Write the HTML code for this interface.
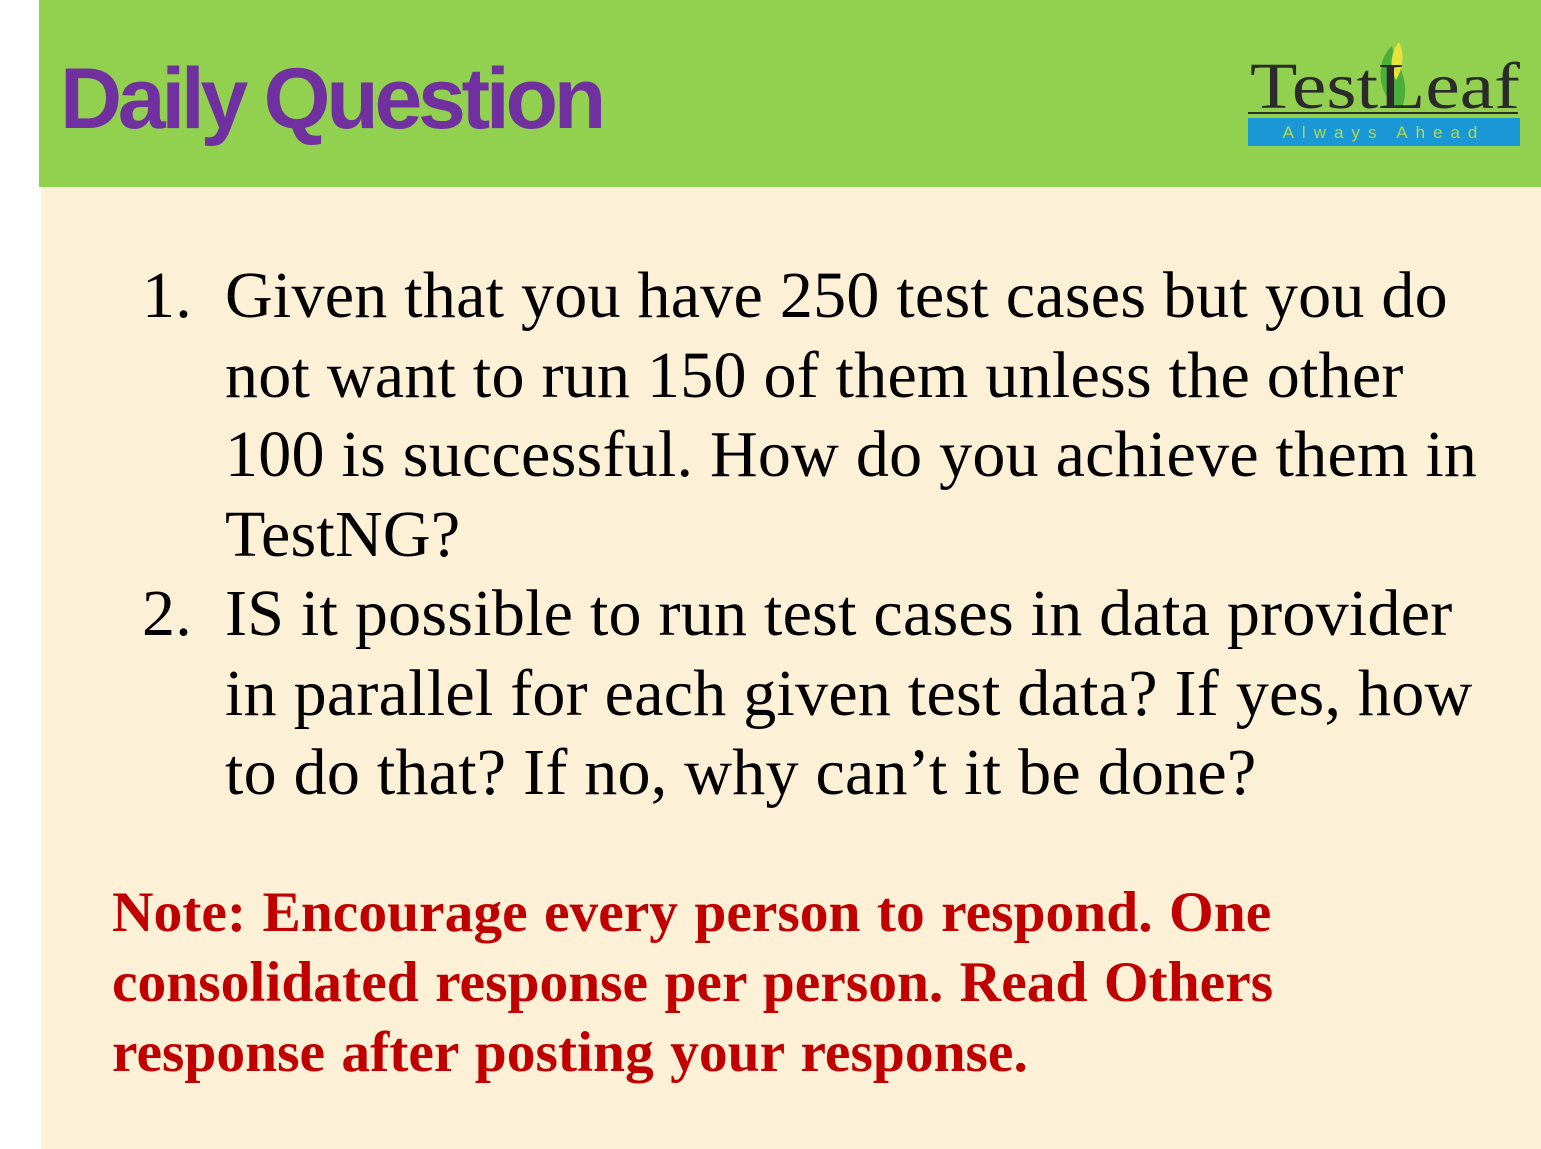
<!DOCTYPE html>
<html><head><meta charset="utf-8"><style>
body{margin:0;width:1541px;height:1149px;background:#fff;position:relative;overflow:hidden}
.hdr{position:absolute;left:39px;top:0;width:1502px;height:187px;background:#92d050}
.bg{position:absolute;left:41px;top:187px;width:1500px;height:962px;background:#fcf0d6}
.title{position:absolute;left:60px;top:54px;font:bold 86px/90px "Liberation Sans",sans-serif;color:#7030a0;letter-spacing:-4.3px;white-space:nowrap}
.q{position:absolute;font:66px/79.5px "Liberation Serif",serif;color:#000;white-space:nowrap;letter-spacing:0.25px}
.n{position:absolute;font:bold 57.5px/70px "Liberation Serif",serif;color:#c00000;white-space:nowrap;left:112px;top:878px;word-spacing:2px}
</style></head><body>
<div class="hdr"></div>
<div class="bg"></div>
<div class="title">Daily Question</div>
<svg style="position:absolute;left:1246px;top:40px" width="276" height="108" viewBox="0 0 276 108">
 <path d="M150 68 C128 48 132 18 146 6 C150 24 166 40 156 68Z" fill="#4caf3a"/>
 <path d="M150 40 C142 25 146 10 153 2 C159 15 157 28 150 40Z" fill="#e8e23a"/>
 <text x="4" y="68" font-family="Liberation Serif,serif" font-size="66" fill="#2b2b2b" textLength="270" lengthAdjust="spacingAndGlyphs">TestLeaf</text>
 <rect x="2" y="72" width="270" height="2" fill="#2b2b2b"/>
 <rect x="2" y="78" width="272" height="28" fill="#1a98d5"/>
 <text x="138" y="98" text-anchor="middle" font-family="Liberation Sans,sans-serif" font-size="17" letter-spacing="8" fill="#b6d84a">Always Ahead</text>
</svg>
<div class="q" style="left:142px;top:256px">1.</div>
<div class="q" style="left:225px;top:256px">Given that you have 250 test cases but you do<br>not want to run 150 of them unless the other<br>100 is successful. How do you achieve them in<br>TestNG?</div>
<div class="q" style="left:142px;top:574px">2.</div>
<div class="q" style="left:225px;top:574px">IS it possible to run test cases in data provider<br>in parallel for each given test data? If yes, how<br>to do that? If no, why can’t it be done?</div>
<div class="n">Note: Encourage every person to respond. One<br>consolidated response per person. Read Others<br>response after posting your response.</div>
</body></html>
